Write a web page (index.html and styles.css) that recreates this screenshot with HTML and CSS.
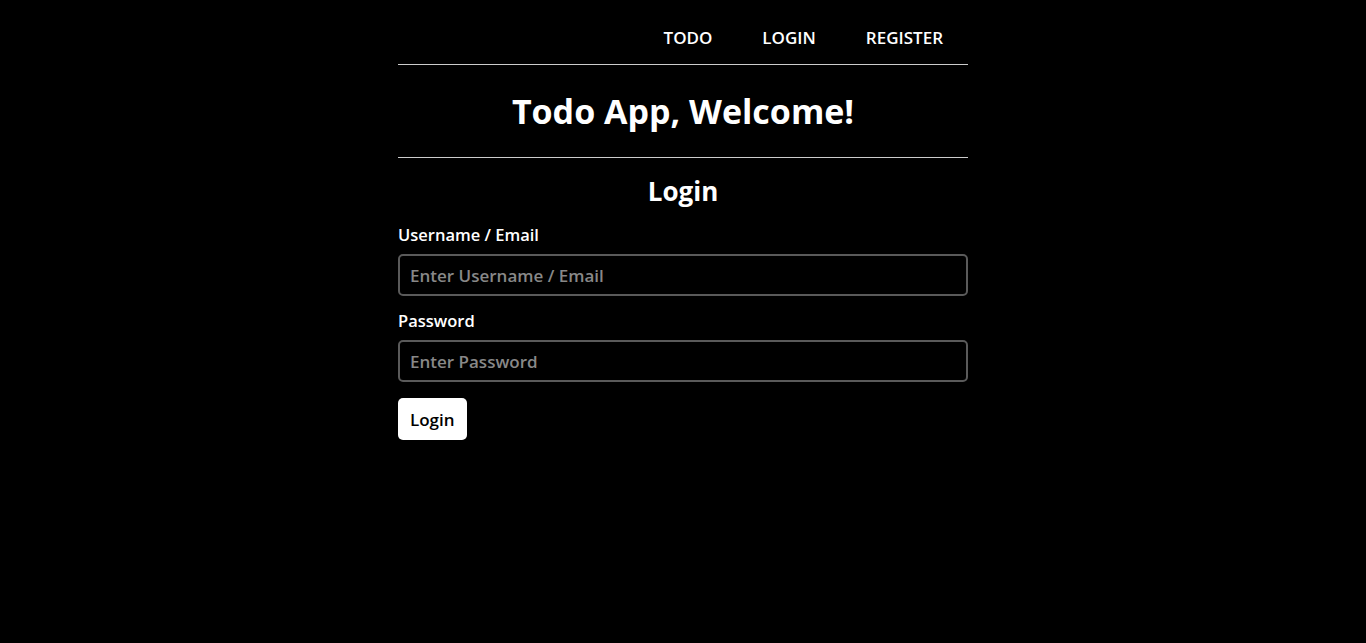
FILE: index.html
```html
<!DOCTYPE html>
<html lang="en">
<head>
    <meta charset="UTF-8">
    <title>Todo App</title>
    <link rel="stylesheet" href="styles.css">
</head>
<body>

<div class="container">
    <nav class="nav">
        <a href="#">TODO</a>
        <a href="#">LOGIN</a>
        <a href="#">REGISTER</a>
    </nav>

    <h1 class="title">Todo App, Welcome!</h1>

    <div class="login">
        <h2>Login</h2>
        <form action="#" method="post" class="login_form">
            <label for="username">Username / Email</label>
            <input type="text" id="username" name="username" placeholder="Enter Username / Email">

            <label for="password">Password</label>
            <input type="password" id="password" name="password" placeholder="Enter Password">

            <div>
                <button type="submit" class="btn">Login</button>
            </div>
        </form>
    </div>
</div>

</body>
</html>
```

FILE: styles.css
```css
* {
    margin: 0;
    padding: 0;
    box-sizing: border-box;
}

body {
    background-color: #000;
    color: #fff;
    font-family: "Open Sans", "Noto Sans", sans-serif;
}

.container {
    width: 570px;
    margin: 0 auto;
}

.nav {
    display: flex;
    justify-content: flex-end;
    padding: 26px 0 14px;
    border-bottom: 1px solid #ccc;
}

.nav a {
    color: #fff;
    text-decoration: none;
    font-size: 17px;
    font-weight: 600;
    padding: 0 25px;
    line-height: 24px;
}

.title {
    text-align: center;
    font-size: 34px;
    font-weight: 700;
    padding: 23px 0 23px;
    line-height: 46px;
    border-bottom: 1px solid #ccc;
}

.login h2 {
    text-align: center;
    font-size: 26px;
    font-weight: 700;
    line-height: 34px;
    margin-top: 16px;
    margin-bottom: 2px;
}

.login_form {
    display: flex;
    flex-direction: column;
}

.login_form label {
    font-size: 16.5px;
    font-weight: 600;
    line-height: 22px;
    margin-top: 14px;
    margin-bottom: 8px;
}

.login_form input {
    height: 42px;
    background-color: #000;
    color: #fff;
    border: 2px solid #5a5a5a;
    border-radius: 5px;
    padding-left: 10px;
    font-family: inherit;
    font-size: 17px;
    font-weight: 600;
}

.login_form input::placeholder {
    color: #888;
}

.btn {
    margin-top: 16px;
    height: 42px;
    padding: 0 12px;
    background-color: #fff;
    color: #000;
    border: none;
    border-radius: 5px;
    font-family: inherit;
    font-size: 17px;
    font-weight: 600;
}
```
